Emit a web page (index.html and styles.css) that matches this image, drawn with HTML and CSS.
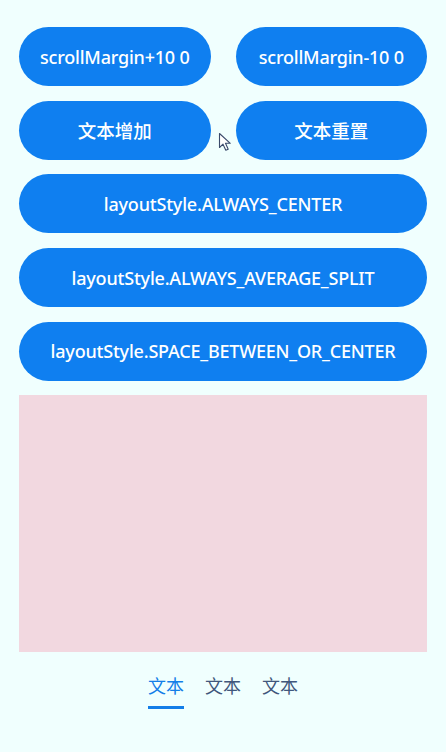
FILE: index.html
```html
<!DOCTYPE html>
<html>
<head>
<meta charset="utf-8">
<link rel="stylesheet" href="styles.css">
</head>
<body>
<div class="page">
  <div class="row">
    <div class="btn">scrollMargin+10 0</div>
    <div class="btn">scrollMargin-10 0</div>
  </div>
  <div class="row">
    <div class="btn cjk">文本增加</div>
    <div class="btn cjk">文本重置</div>
  </div>
  <div class="btn wide">layoutStyle.ALWAYS_CENTER</div>
  <div class="btn wide">layoutStyle.ALWAYS_AVERAGE_SPLIT</div>
  <div class="btn wide">layoutStyle.SPACE_BETWEEN_OR_CENTER</div>
  <div class="panel"></div>
  <div class="tabs">
    <div class="tab active">文本</div>
    <div class="tab">文本</div>
    <div class="tab">文本</div>
  </div>
</div>
<svg class="cursor" width="16" height="20" viewBox="0 0 16 20">
  <path d="M1.5 1.5 L1.5 15.5 L5 12.2 L7.8 18.3 L10.2 17.2 L7.5 11.3 L12.3 11.3 Z" fill="#ffffff" stroke="#3a4a6b" stroke-width="1.1" stroke-linejoin="round"/>
</svg>
</body>
</html>
```

FILE: styles.css
```css
html, body {
  margin: 0;
  padding: 0;
  background: #f0fffe;
}
body {
  width: 446px;
  height: 752px;
  overflow: hidden;
  position: relative;
  font-family: "Noto Sans", "Noto Sans CJK SC", sans-serif;
}
.page {
  display: flex;
  flex-direction: column;
  padding: 27px 19px 0 19px;
  gap: 14.7px;
}
.row {
  display: flex;
  gap: 25px;
}
.row .btn {
  flex: 1;
}
.btn {
  height: 59px;
  border-radius: 30px;
  background: #0f7ff0;
  color: #ffffff;
  font-size: 18px;
  font-weight: 500;
  display: flex;
  align-items: center;
  justify-content: center;
  letter-spacing: -0.2px;
}
.btn.cjk {
  font-size: 18.5px;
  letter-spacing: 0;
  font-family: "Noto Sans CJK SC", sans-serif;
}
.panel {
  height: 257px;
  background: #f2d8e0;
  margin-top: -0.7px;
}
.tabs {
  display: flex;
  justify-content: center;
  gap: 21px;
  margin-top: 6px;
}
.tab {
  font-family: "Noto Sans CJK SC", sans-serif;
  font-size: 18px;
  color: #40577c;
  padding-bottom: 8px;
  line-height: 26px;
  border-bottom: 3px solid transparent;
}
.tab.active {
  color: #137ee8;
  border-bottom-color: #137ee8;
}
.cursor {
  position: absolute;
  left: 218px;
  top: 132px;
}
```
